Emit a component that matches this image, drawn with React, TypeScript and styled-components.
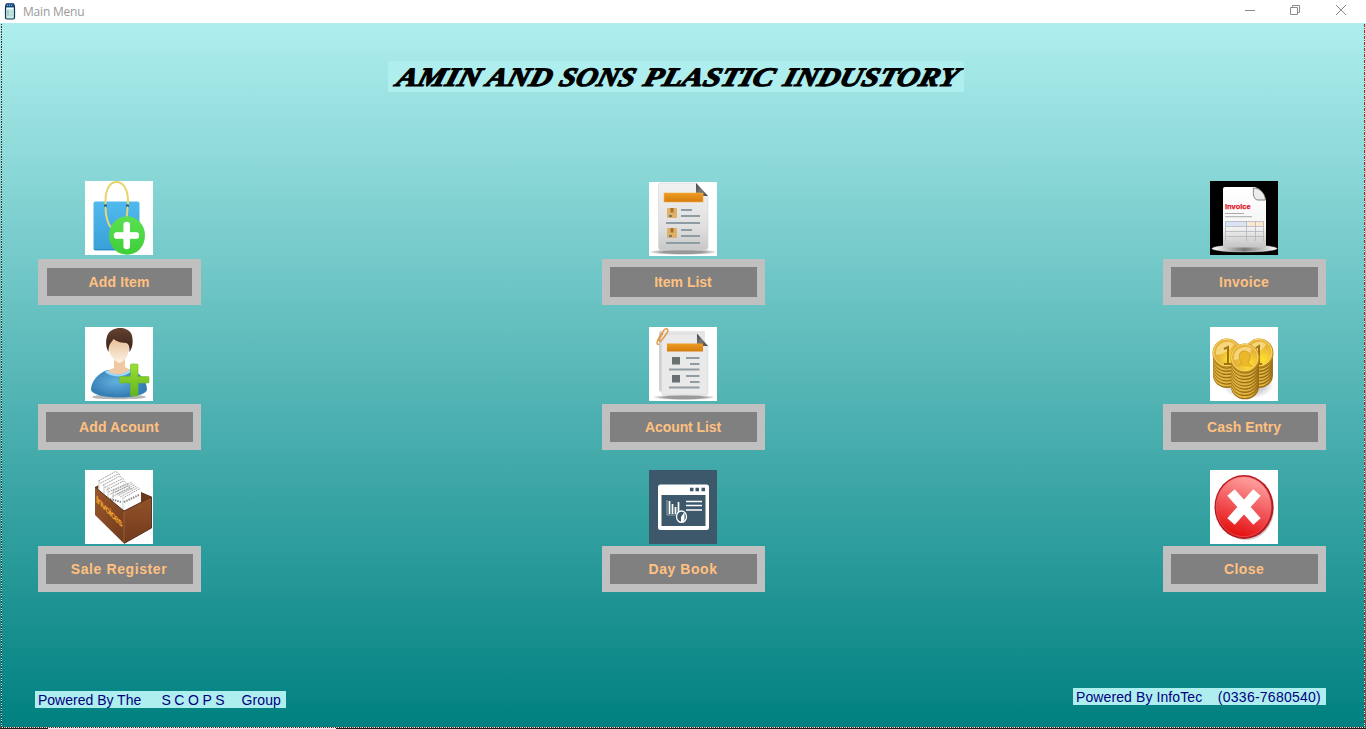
import React from "react";
import styled, { createGlobalStyle } from "styled-components";

const GlobalStyle = createGlobalStyle`
  html, body { margin: 0; padding: 0; }
  body { overflow: hidden; font-family: "Liberation Sans", Arial, sans-serif; }
  svg { display: block; }
`;

const Window = styled.div`
  width: 1366px;
  height: 729px;
  display: flex;
  flex-direction: column;
  overflow: hidden;
  background: #fff;
`;

const TitleBar = styled.header`
  height: 23px;
  flex: none;
  display: flex;
  align-items: center;
  box-sizing: border-box;
  padding: 0 19px 0 4px;
  background: #fff;
`;

const TitleText = styled.span`
  margin-left: 7px;
  flex: 1;
  font: 12px/16px "Open Sans", "Noto Sans", sans-serif;
  letter-spacing: -0.2px;
  color: #999;
`;

const WindowControls = styled.div`
  display: flex;
  gap: 34px;
  margin-top: -3px;
`;

const Form = styled.main`
  height: 705px;
  flex: none;
  box-sizing: border-box;
  display: flex;
  flex-direction: column;
  position: relative;
  background: linear-gradient(#afeeee, #008080);
`;

const FocusEdge = styled.div<{ $side: "left" | "right" | "bottom" }>`
  position: absolute;
  ${({ $side }) =>
    $side === "bottom"
      ? `left: 1px; right: 1px; bottom: 0; height: 1px;
         background: repeating-linear-gradient(90deg, #e01010 0 1px, #d8ffff 1px 2px, #401010 2px 3px, #9fdede 3px 4px);`
      : `${$side}: 1px; top: 1px; bottom: 1px; width: 1px;
         background: repeating-linear-gradient(${
           $side === "right" ? "#f00 0 3px, #c8f4f4 3px 4px, #f00 4px 5px, #c8f4f4 5px 6px" : "#5b1010 0 1px, #b8e8e8 1px 2px, #104040 2px 4px, #b8e8e8 4px 5px"
         });`}
`;

const Banner = styled.h1`
  margin: 38px 0 0 388px;
  width: 576px;
  height: 31px;
  flex: none;
  background: #afeeee;
`;

const MenuRow = styled.section<{ $gap: number }>`
  display: flex;
  justify-content: space-between;
  margin: ${({ $gap }) => $gap}px 40px 0 38px;
`;

const MenuColumn = styled.div<{ $shift?: number }>`
  width: 163px;
  display: flex;
  flex-direction: column;
  margin-right: ${({ $shift }) => $shift ?? 0}px;
`;

const Picture = styled.div<{ $top?: number; $bg?: string; $gap: number }>`
  width: 68px;
  height: 74px;
  margin: ${({ $top }) => $top ?? 0}px 0 ${({ $gap, $top }) => $gap - ($top ?? 0)}px 47px;
  background: ${({ $bg }) => $bg ?? "#fff"};
  overflow: hidden;
`;

const MenuButton = styled.button<{ $focused?: boolean; $tracking?: number }>`
  width: 163px;
  height: 46px;
  box-sizing: border-box;
  padding: 0 1px 0 0;
  border: solid #c0c0c0;
  border-width: ${({ $focused }) => ($focused ? "9px" : "8px")};
  background: #808080;
  color: #ffc080;
  font: bold 14px/28px "Liberation Sans", Arial, sans-serif;
  letter-spacing: ${({ $tracking }) => $tracking ?? 0}px;
  text-align: center;
  white-space: nowrap;
`;

const Footer = styled.footer`
  margin: auto 40px 0 35px;
  display: flex;
  justify-content: space-between;
  align-items: flex-start;
  height: 40px;
`;

const Credit = styled.p<{ $w: number; $top?: number }>`
  margin: ${({ $top }) => $top ?? 0}px 0 0;
  width: ${({ $w }) => $w}px;
  height: 17px;
  box-sizing: border-box;
  padding: 0 5px 0 3px;
  display: flex;
  justify-content: space-between;
  background: #afeeee;
  color: #000080;
  font-size: 14px;
  line-height: 18px;
  white-space: pre;
`;

const CreditPart = styled.span<{ $tracking?: number; $indent?: number }>`
  letter-spacing: ${({ $tracking }) => $tracking ?? 0}px;
  padding-left: ${({ $indent }) => $indent ?? 0}px;
`;

const Desktop = styled.div`
  height: 1px;
  flex: none;
  padding-left: 48px;
  background: #26211f;
`;

const DesktopStrip = styled.div`
  width: 288px;
  height: 1px;
  background: #ececec;
`;

const Svg = ({ children }: { children: React.ReactNode }) => (
  <svg width="68" height="74" viewBox="0 0 68 74">{children}</svg>
);

const AppIcon = () => (
  <svg width="12" height="17" viewBox="0 0 12 17">
    <rect x="1.5" y="3" width="9" height="13" rx="1.5" fill="#c9e9e7" stroke="#0b3a4e" strokeWidth="1.2" />
    <path d="M2.500 0.500h7l1 1.500v2h-9V2z" fill="#1c4f8c" stroke="#0b2e52" strokeWidth="0.6" />
    <path d="M3 2.200h1m1 0h1m1 0h1" stroke="#9ed0f5" />
    <path d="M3 5.500h6" stroke="#fff" />
    <path d="M4 7.500v6" stroke="#45696f" strokeDasharray="1 1" />
    <path d="M6 9h3M6 12h3" stroke="#a4cdcc" />
  </svg>
);

const BagIcon = () => (
  <Svg>
    <defs>
      <linearGradient id="bag" x2="0" y2="1"><stop stopColor="#50b9ed" /><stop offset="1" stopColor="#3aa0d8" /></linearGradient>
      <linearGradient id="plus" x2="0" y2="1"><stop stopColor="#5be052" /><stop offset="1" stopColor="#3fce38" /></linearGradient>
    </defs>
    <rect x="8.500" y="20.500" width="46" height="49" rx="2" fill="url(#bag)" />
    <path d="M20.500 25V20C20.500 8 25 1 31.500 1S43 8 43 20v5" fill="none" stroke="#ead36b" strokeWidth="2" />
    <path d="M9 68.500h45" stroke="#2f8cc4" />
    <circle cx="20.500" cy="25" r="1.700" fill="#155f9b" /><circle cx="42.500" cy="25" r="1.700" fill="#155f9b" />
    <path d="M20.500 25.500C20.500 37 22.500 43 27 48M42.500 25.500C42.500 32 42.500 34 41 38" fill="none" stroke="#e9d778" strokeWidth="1.900" />
    <ellipse cx="42" cy="54.500" rx="18" ry="19.300" fill="url(#plus)" />
    <path d="M41.700 44v21M32 54.500h19" stroke="#fff" strokeWidth="6.500" strokeLinecap="round" />
    <path d="M41.700 42v25M30 54.500h23" stroke="#fff" strokeWidth="5.600" />
  </Svg>
);

const PaperDefs = ({ id }: { id: string }) => (
  <defs>
    <linearGradient id={`${id}p`} x2="0" y2="1"><stop stopColor="#f1f1f1" /><stop offset=".65" stopColor="#e0e0e0" /><stop offset="1" stopColor="#c8c8c8" /></linearGradient>
    <linearGradient id={`${id}o`} x2="0" y2="1"><stop stopColor="#ed9b22" /><stop offset="1" stopColor="#d57d0d" /></linearGradient>
    <linearGradient id={`${id}f`} x2="1" y2="1"><stop stopColor="#444" /><stop offset=".5" stopColor="#777" /><stop offset="1" stopColor="#444" /></linearGradient>
    <radialGradient id={`${id}s`}><stop offset=".6" stopColor="#999" /><stop offset="1" stopColor="#999" stopOpacity=".2" /></radialGradient>
  </defs>
);

const ItemListIcon = () => (
  <Svg>
    <PaperDefs id="il" />
    <ellipse cx="34" cy="70" rx="33" ry="2.800" fill="url(#ils)" />
    <path d="M12 1H47L59 14V65q0 3-3 3H12q-2.500 0-2.500-3V4q0-3 2.500-3z" fill="url(#ilp)" stroke="#d4d4d4" strokeWidth=".6" />
    <path d="M47 1L59 14H49q-2 0-2-2z" fill="url(#ilf)" />
    <rect x="15" y="11" width="39" height="9" fill="url(#ilo)" stroke="#f3b04e" strokeWidth=".6" />
    {[26, 46].map((y) => (
      <g key={y}>
        <rect x="18" y={y} width="10" height="10" rx="1" fill="#dfb068" />
        <path d={`M21.500 ${y}h3v5l-1.500-1-1.500 1z`} fill="#a8702a" />
        <path d={`M20 ${y + 8}h3`} stroke="#777" strokeWidth="2" />
        <path d={`M32 ${y + 2}h11M32 ${y + 8}h19M17 ${y + 15}h34`} stroke="#8e9ca3" strokeWidth="2" />
      </g>
    ))}
  </Svg>
);

const InvoiceIcon = () => (
  <Svg>
    <defs>
      <linearGradient id="inv" x2="0" y2="1"><stop stopColor="#fff" /><stop offset=".65" stopColor="#f5f5f5" /><stop offset="1" stopColor="#c4c4c4" /></linearGradient>
      <linearGradient id="disc"><stop stopColor="#fff" /><stop offset=".5" stopColor="#777" /><stop offset="1" stopColor="#fff" /></linearGradient>
    </defs>
    <ellipse cx="34.500" cy="67.500" rx="32.500" ry="3.400" fill="url(#disc)" stroke="#ddd" strokeWidth=".5" />
    <path d="M15 6H45Q52 8 56 19V66.500H13V8q0-2 2-2z" fill="url(#inv)" />
    <path d="M43.500 7c-.5 7 0 11 4 12h8C55 12 50 7 43.500 7z" fill="#ececec" stroke="#666" strokeWidth=".8" />
    <text x="15" y="27.500" textLength="25.500" lengthAdjust="spacingAndGlyphs" fontFamily="Liberation Sans, sans-serif" fontSize="8" fontWeight="bold" fill="#e5121f" stroke="#e5121f" strokeWidth=".25">invoice</text>
    <path d="M15 32.500h19M15 35.700h27" stroke="#aaa" />
    <rect x="15" y="40.500" width="22" height="4.500" fill="#d9e3f6" /><rect x="37" y="40.500" width="17" height="4.500" fill="#fae8cf" />
    <path d="M15.500 40.500h38M15.500 45.500h38M15.500 50.500h38M15.500 55.500h38M15.500 40v20M36.500 40v20M45.500 40v20M53.500 40v20" stroke="#b4b4ba" strokeWidth=".8" />
  </Svg>
);

const PersonIcon = () => (
  <Svg>
    <defs>
      <radialGradient id="shirt" cx=".45" cy=".45"><stop stopColor="#62b0df" /><stop offset="1" stopColor="#367fb6" /></radialGradient>
      <linearGradient id="skin" x2="0" y2="1"><stop stopColor="#e6bd92" /><stop offset="1" stopColor="#fdf3e5" /></linearGradient>
      <linearGradient id="hair" x2="0" y2="1"><stop stopColor="#65422f" /><stop offset="1" stopColor="#352018" /></linearGradient>
      <linearGradient id="gp" x2="0" y2="1"><stop stopColor="#9be033" /><stop offset="1" stopColor="#62b31f" /></linearGradient>
    </defs>
    <ellipse cx="34" cy="70" rx="27" ry="2.300" fill="#999" opacity=".7" />
    <path d="M22 43C12 47 6 55 6 63c3 10 53 10 56 0 0-9-6-17-18-21z" fill="url(#shirt)" />
    <path d="M29 31v10l-7 3c6 5 18 5 24-1l-6-3v-9z" fill="#efc9a3" />
    <path d="M22 43c7 6 17 6 23-1l2 2c-7 7-20 7-27 1z" fill="#9bd8fb" />
    <path d="M23.500 16c0 11 4 17 11 20 7-3 10-9 10-20 0-6-20-8-21 0z" fill="url(#skin)" />
    <path d="M23.500 25c-3-5-3-12-1-17C27-1 42-1 46.500 7c2 6 1.500 13-2 18 0-5 0-7-3-9-4 0-9-1-13-4-2 4-5 4-5 13z" fill="url(#hair)" />
    <path d="M46.500 37h5.500q1 0 1 1v11.500h10q1 0 1 1v4.500q0 1-1 1H53v12q0 1-1 1h-5.500q-1 0-1-1V56H35.500q-1 0-1-1v-4.500q0-1 1-1h10V38q0-1 1-1z" fill="url(#gp)" stroke="#74b92a" strokeWidth=".6" />
  </Svg>
);

const AccountListIcon = () => (
  <Svg>
    <PaperDefs id="al" />
    <ellipse cx="35" cy="70.300" rx="30" ry="2.600" fill="url(#als)" />
    <path d="M12 4h42q2 0 2 2v59H13q-3 0-3-3V6q0-2 2-2z" fill="#cfcfcf" />
    <path d="M12 4h42q2 0 2 3v12H12z" fill="#e6e6e6" />
    <path d="M15 7h33l11 12v47q0 2-2 2H15q-2.500 0-2.500-3V9q0-2 2.500-2z" fill="#e9e9e9" stroke="#d6d6d6" strokeWidth=".6" />
    <path d="M48 6.500L59 19H49q-1-1-1-3z" fill="url(#alf)" />
    <rect x="18" y="16.500" width="36" height="8" fill="url(#alo)" />
    <path d="M10 17C6 19 9 12 11 9l4-6c3-3 5 0 3 3l-5 7c-2 3-4 1-2-2l3-5" fill="none" stroke="#dd9b49" strokeWidth="1.400" />
    {[30, 48].map((y) => (
      <g key={y}>
        <rect x="23" y={y} width="8" height="7.500" fill="#6a6f72" />
        <path d={`M37 ${y + 1}h13.500M41 ${y + 7}h9.500M20 ${y + 12.500}h30.500`} stroke="#8f9ca2" strokeWidth="2" />
      </g>
    ))}
  </Svg>
);

const CoinStack = ({ x, y, n }: { x: number; y: number; n: number }) => (
  <g>
    {Array.from({ length: n }, (_, i) => n - i).map((i) => (
      <g key={i}>
        <ellipse cx={x} cy={y + i * 3.200} rx="14" ry="12.500" fill="#9a6f18" />
        <ellipse cx={x - 0.500} cy={y + i * 3.200 - 1} rx="13.300" ry="12.200" fill="#e3b640" />
      </g>
    ))}
    <ellipse cx={x} cy={y} rx="14.500" ry="14.500" fill="#c58e13" />
    <ellipse cx={x - 0.300} cy={y - 0.500} rx="13.300" ry="13.300" fill="url(#coin)" stroke="#f5da76" />
    <path d={`M${x - 11} ${y + 2}A11.500 11.500 0 0 1 ${x + 7} ${y - 9}Q${x + 3} ${y} ${x - 11} ${y + 2}z`} fill="#fff3b4" opacity=".55" />
  </g>
);

const CoinsIcon = () => (
  <Svg>
    <defs>
      <radialGradient id="coin" cx=".65" cy=".75"><stop stopColor="#ffe12d" /><stop offset="1" stopColor="#e8b33b" /></radialGradient>
      <radialGradient id="coinShade"><stop offset=".6" stopColor="#aaa" /><stop offset="1" stopColor="#aaa" stopOpacity="0" /></radialGradient>
    </defs>
    <ellipse cx="38" cy="58" rx="26" ry="14" fill="url(#coinShade)" opacity=".6" />
    <CoinStack x={49} y={26} n={7} />
    <path d="M46 21l3-2v18m-3 0h6" fill="none" stroke="#a27411" strokeWidth="2" />
    <CoinStack x={17} y={26} n={7} />
    <path d="M14 22l4-2v17m-4 0h7" fill="none" stroke="#a27411" strokeWidth="2" />
    <CoinStack x={35} y={31} n={9} />
    <path d="M28 39c1-2 3-2 4-3-4-4-4-12 2-12s8 6 4 12c2 1 3 2 4 4" fill="#eab82b" stroke="#ce9a22" strokeWidth=".8" />
  </Svg>
);

const InvoiceBoxIcon = () => (
  <Svg>
    <defs>
      <linearGradient id="box" x2="1" y2="1"><stop stopColor="#98572c" /><stop offset="1" stopColor="#713b1c" /></linearGradient>
      <linearGradient id="side" x2="0" y2="1"><stop stopColor="#93522a" /><stop offset="1" stopColor="#713b1c" /></linearGradient>
    </defs>
    <path d="M10 17L14 15 56 22.500 66.500 27 39 41z" fill="#6b3819" />
    <path d="M13 20L14 9 31 1 45 8 56 17V33L39 41z" fill="#fff" />
    {Array.from({ length: 8 }, (_, i) => (
      <path key={i} d={`M${13.500 + i * 2} ${11 + i * 2.200}l${17 + (i % 2)}-${9.500 - i * 0.2} 2 1`} fill="none" stroke="#777" strokeWidth=".7" strokeDasharray="1.800 .7" />
    ))}
    {Array.from({ length: 6 }, (_, i) => (
      <path key={i} d={`M${28 + i * 1.800} ${21 + i * 1.500}l${19 - i * 0.2}-${9 + i * 0.2}`} stroke="#888" strokeWidth=".7" strokeDasharray="2 .6" />
    ))}
    <path d="M28 20v11M38 29v11M14 10v10M19 14v10M23 17v11" stroke="#aaa" strokeWidth=".6" />
    <path d="M25 29l11 3M39 32l15-7" stroke="#888" strokeWidth="2" strokeDasharray="1.500 1" />
    <path d="M10 17L39 41V73.500L10 45z" fill="url(#box)" />
    <path d="M39 41L66.500 27V58L39 73.500z" fill="url(#side)" />
    <path d="M10 17L39 41 66.500 27V58L39 73.500M56 22.500L66.500 27" fill="none" stroke="#4f2a16" strokeWidth=".9" />
    <path d="M39 42v31" stroke="#a87450" strokeWidth=".6" />
    <text transform="matrix(.78 .76 0 1 11 32)" fontFamily="Liberation Sans, sans-serif" fontSize="10.500" fontWeight="bold" textLength="34" fill="#f5a62d">Invoices</text>
  </Svg>
);

const DayBookIcon = () => (
  <Svg>
    <rect x="9" y="14.500" width="51" height="45.500" rx="2.500" fill="#fff" />
    <path d="M41 19.500h3.500M46.500 19.500h3.500M52.500 19.500h3.500" stroke="#3d586b" strokeWidth="3.500" />
    <rect x="12.500" y="25" width="44" height="31" fill="#3d586b" />
    <path d="M20.500 44V31M23.500 44V34M26.500 44V37M29.500 44V32" stroke="#fff" strokeWidth="1.700" />
    <path d="M18 30v15h12" fill="none" stroke="#b8c6d0" strokeWidth=".7" />
    <path d="M37 31.500h16M37 35.500h16M37 40h16" stroke="#fff" strokeWidth="1.500" />
    <ellipse cx="32.500" cy="46.700" rx="5" ry="5.700" fill="#3d586b" stroke="#fff" strokeWidth="1.300" />
    <path d="M32 47l3.500-5v8l-3.500 3z" fill="#fff" />
  </Svg>
);

const CloseIcon = () => (
  <Svg>
    <defs>
      <linearGradient id="red" x1=".65" x2=".35" y2="1"><stop stopColor="#ffa4a2" /><stop offset=".45" stopColor="#f35f62" /><stop offset="1" stopColor="#e30c0c" /></linearGradient>
    </defs>
    <ellipse cx="36" cy="39" rx="28" ry="31" fill="#aaa" opacity=".6" />
    <ellipse cx="34" cy="37" rx="29.500" ry="32" fill="#b7191f" />
    <ellipse cx="33.700" cy="36.700" rx="27.500" ry="30" fill="url(#red)" stroke="#ee6669" strokeWidth=".6" />
    <path d="M21 22.500L47 51.500M47 22.500L21 51.500" stroke="#fff" strokeWidth="10" />
  </Svg>
);

type Item = { label: string; icon: React.ReactNode; bg?: string; top?: number; tracking?: number; focused?: boolean };

const rows: { gap: number; space: number; items: Item[] }[] = [
  {
    gap: 89, space: 4,
    items: [
      { label: "Add Item", icon: <BagIcon />, focused: true, tracking: 0.15 },
      { label: "Item List", icon: <ItemListIcon />, top: 1 },
      { label: "Invoice", icon: <InvoiceIcon />, bg: "#000", tracking: 0.25 },
    ],
  },
  {
    gap: 22, space: 3,
    items: [
      { label: "Add Acount", icon: <PersonIcon />, tracking: 0.1 },
      { label: "Acount List", icon: <AccountListIcon />, tracking: -0.1 },
      { label: "Cash Entry", icon: <CoinsIcon /> },
    ],
  },
  {
    gap: 20, space: 2,
    items: [
      { label: "Sale Register", icon: <InvoiceBoxIcon />, tracking: 0.6 },
      { label: "Day Book", icon: <DayBookIcon />, bg: "#3d586b", tracking: 0.55 },
      { label: "Close", icon: <CloseIcon />, tracking: 0.4 },
    ],
  },
];

const bannerWords: [string, number, number][] = [
  ["AMIN", 7, 84],
  ["AND", 97, 65],
  ["SONS", 170, 75],
  ["PLASTIC", 254, 130],
  ["INDUSTORY", 394, 174],
];

export default function App() {
  return (
    <Window>
      <GlobalStyle />
      <TitleBar>
        <AppIcon />
        <TitleText>Main Menu</TitleText>
        <WindowControls>
          <svg width="12" height="12" viewBox="0 0 12 12" fill="none" stroke="#8a8a8a"><path d="M2 6.500h10" /></svg>
          <svg width="12" height="12" viewBox="0 0 12 12" fill="none" stroke="#8a8a8a"><path d="M1.500 3.500h7v7h-7zM3.500 3.500v-2h7v7h-2" /></svg>
          <svg width="12" height="12" viewBox="0 0 12 12" fill="none" stroke="#8a8a8a"><path d="M1 1l10 10M11 1L1 11" /></svg>
        </WindowControls>
      </TitleBar>
      <Form>
        <FocusEdge $side="left" />
        <FocusEdge $side="right" />
        <FocusEdge $side="bottom" />
        <Banner>
          <svg width="576" height="31" viewBox="0 0 576 31">
            {bannerWords.map(([word, x, w]) => (
              <text key={word} transform={`translate(${x} 24.600) skewX(-16)`} textLength={w} lengthAdjust="spacingAndGlyphs" fontFamily="Liberation Serif, serif" fontStyle="italic" fontWeight="700" fontSize="26.500" stroke="#000" strokeWidth="1.200">{word}</text>
            ))}
          </svg>
        </Banner>
        {rows.map((row) => (
          <MenuRow key={row.gap} $gap={row.gap}>
            {row.items.map((item, i) => (
              <MenuColumn key={item.label} $shift={i === 1 ? -3 : 0}>
                <Picture $top={item.top} $bg={item.bg} $gap={row.space}>{item.icon}</Picture>
                <MenuButton $focused={item.focused} $tracking={item.tracking}>{item.label}</MenuButton>
              </MenuColumn>
            ))}
          </MenuRow>
        ))}
        <Footer>
          <Credit $w={251} $top={3}>
            <CreditPart>Powered By The</CreditPart>
            <CreditPart $tracking={-0.15} $indent={3}>S C O P S</CreditPart>
            <CreditPart $tracking={0.1}>Group</CreditPart>
          </Credit>
          <Credit $w={253}>
            <CreditPart $tracking={0.1}>Powered By InfoTec</CreditPart>
            <CreditPart $tracking={0.25}>(0336-7680540)</CreditPart>
          </Credit>
        </Footer>
      </Form>
      <Desktop><DesktopStrip /></Desktop>
    </Window>
  );
}
